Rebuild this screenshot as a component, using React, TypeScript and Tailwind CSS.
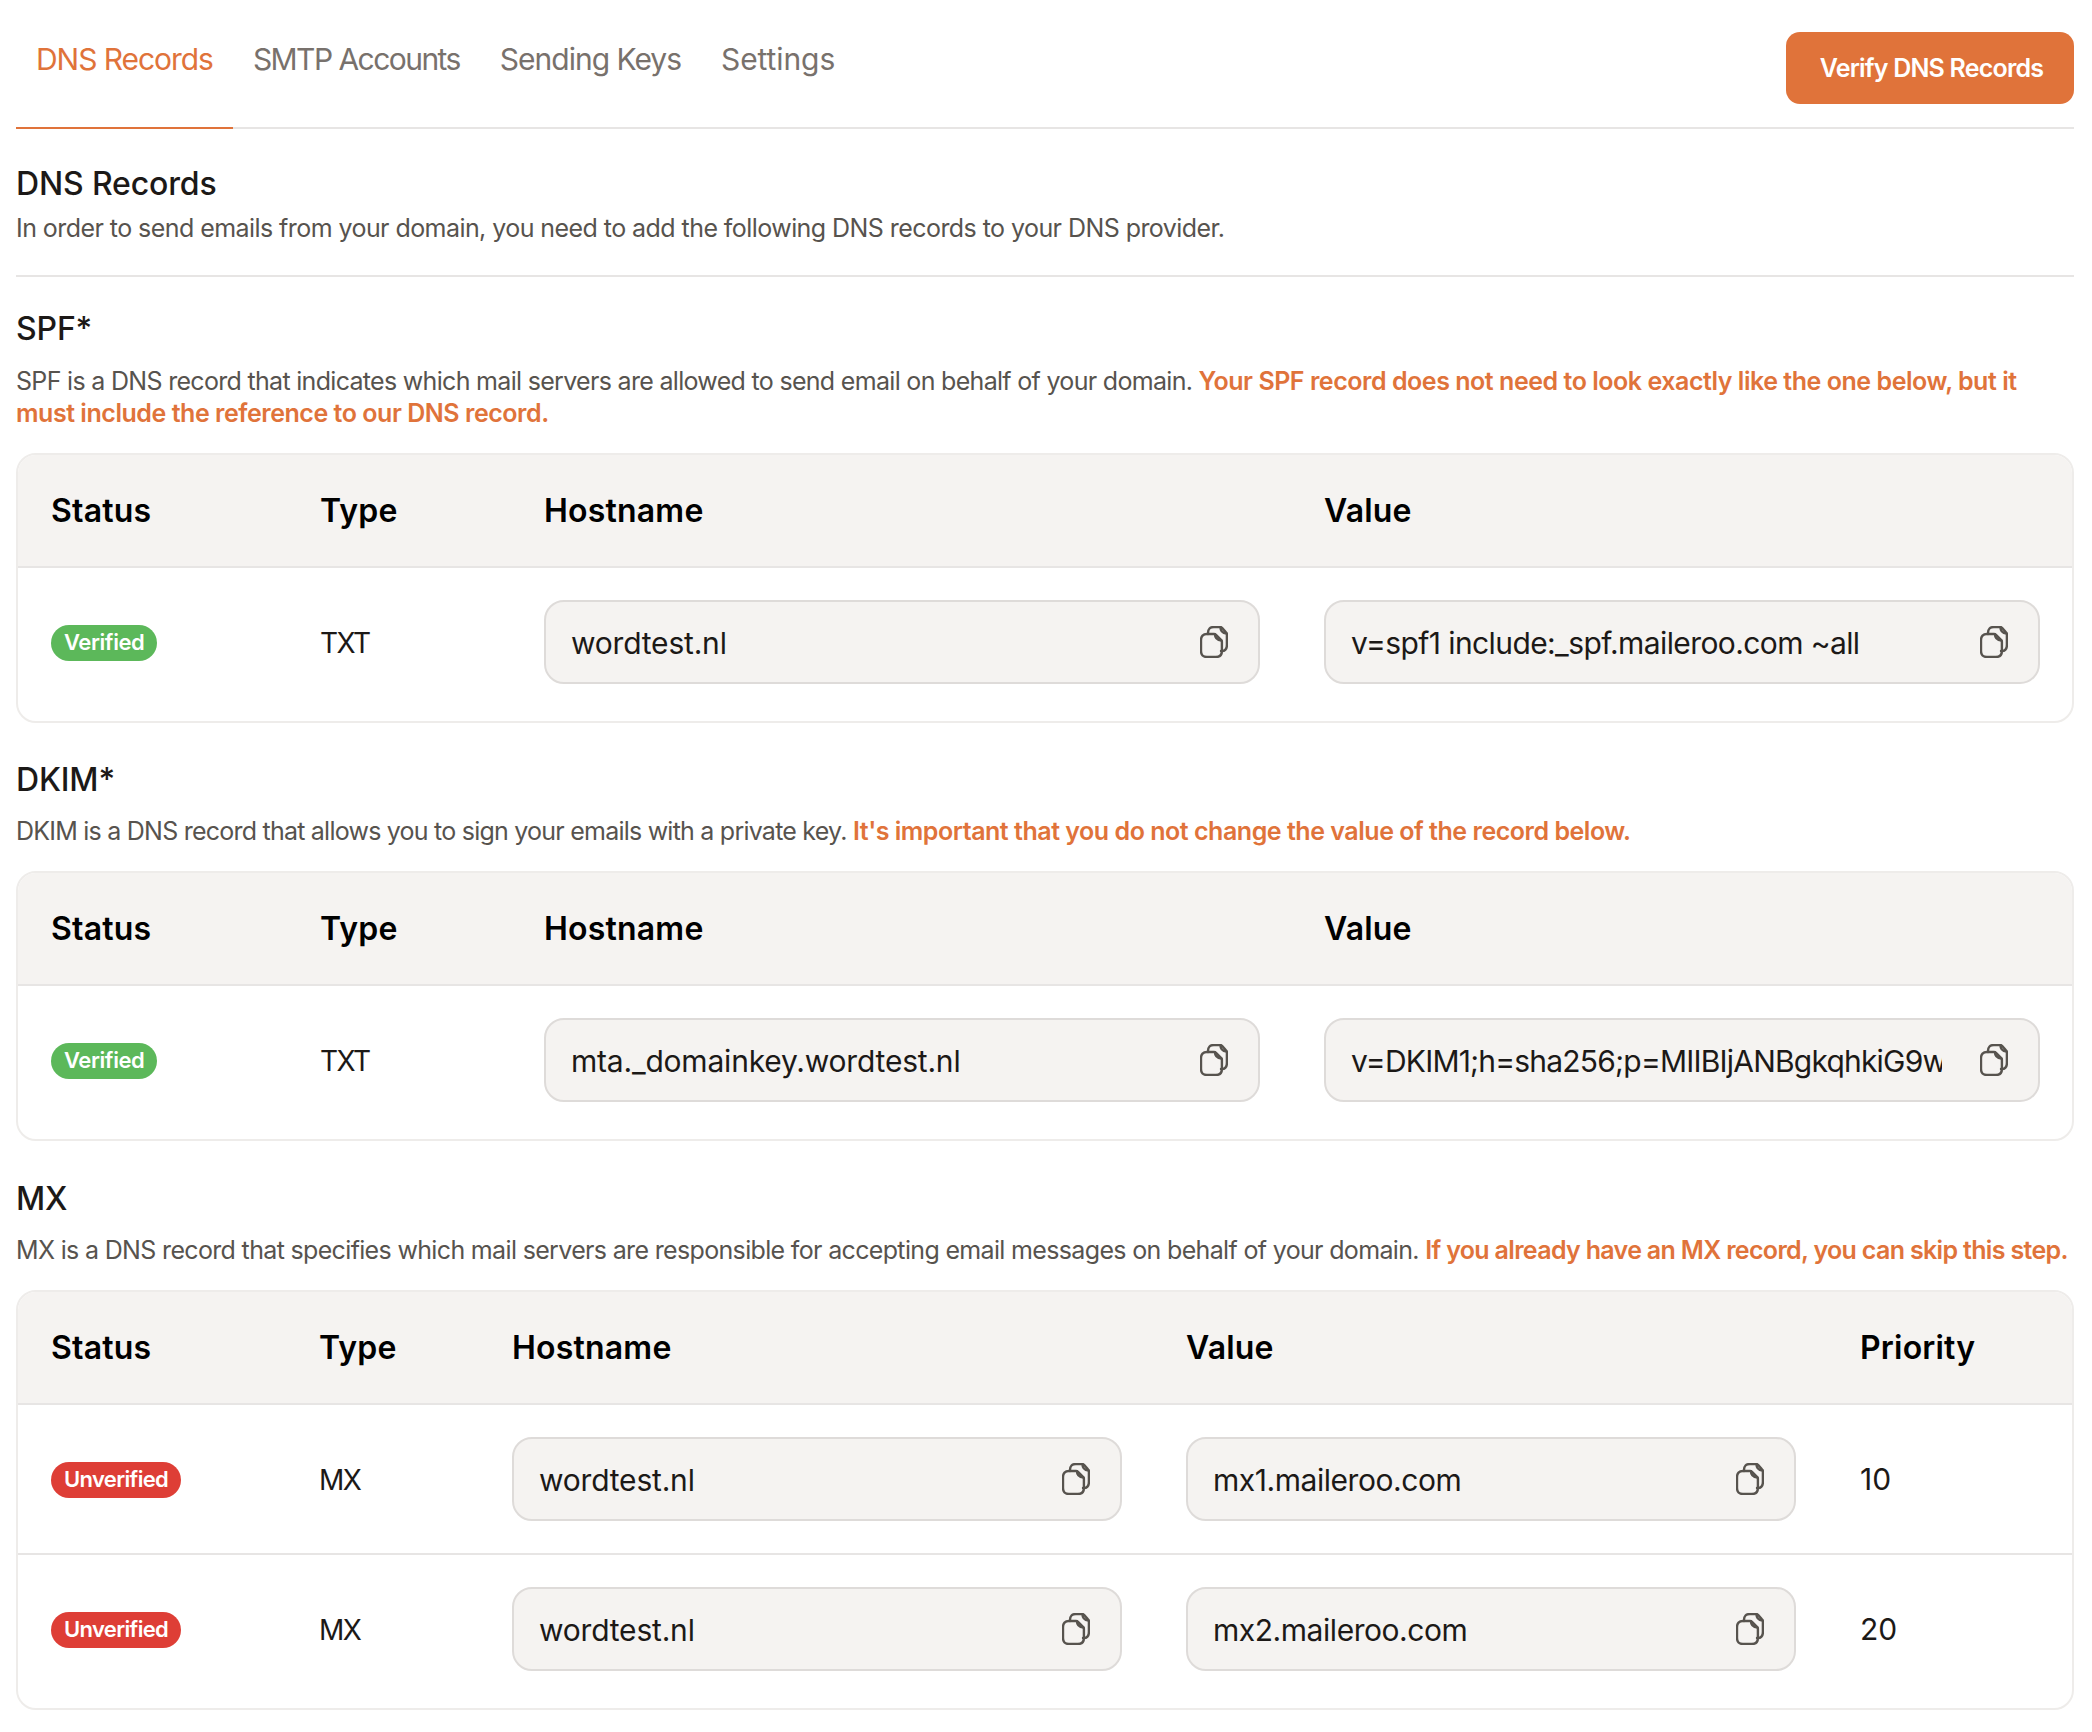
import React from 'react'

const font = "font-['Inter',sans-serif]"

const CopyIcon = () => (
  <svg width="28" height="32" viewBox="0 0 28 32" fill="none" stroke="#57534e" strokeWidth="2.4" strokeLinejoin="round" strokeLinecap="round" className="shrink-0">
    <path d="M8 8V7c0-4 2-6 6-6h6c1 0 1.500.3 2 .8l4 4.500c.5.5.9 1 .9 2V19c0 4-2 6-5 6h-.9" />
    <path d="M20.500 1.500c0 3 2 5.500 6 6" />
    <path d="M7 8h7c1 0 1.500.3 2 .8l5 5c.5.5.9 1 .9 2V25c0 4-2 6-6 6H7c-4 0-6-2-6-6V14c0-4 2-6 6-6z" />
    <path d="M15 8.500c0 3 2 5.500 6.500 6" />
  </svg>
)

const Badge = ({ ok }: { ok: boolean }) => (
  <span className={`mt-[1px] inline-flex h-[36px] items-center rounded-full px-[13px] text-[22px] font-semibold text-white ${ok ? 'bg-[#5cb85a] tracking-[-0.4px]' : 'bg-[#de3e36] tracking-[-0.65px]'}`}>
    {ok ? 'Verified' : 'Unverified'}
  </span>
)

const Field = ({ value, tight = 'tracking-[-0.2px]' }: { value: string; tight?: string }) => (
  <div className="flex h-[84px] items-center justify-between rounded-[20px] border-2 border-[#dedbd9] bg-[#f5f3f1] pl-[25px] pr-[30px]">
    <span className={`w-[591px] max-w-full overflow-hidden whitespace-nowrap pt-[2px] text-[30px] text-[#1c1917] ${tight}`}>{value}</span>
    <CopyIcon />
  </div>
)

const HeadCell = ({ children }: { children: React.ReactNode }) => (
  <div className="text-[32px] font-semibold tracking-[0.2px] text-black">{children}</div>
)

type Row = { ok: boolean; type: string; host: string; value: string; tight: string; priority?: string }

const Table = ({ cols, head, rows }: { cols: string; head: string[]; rows: Row[] }) => (
  <div className="overflow-hidden rounded-[20px] border-2 border-[#eeecea]">
    <div className={`grid h-[113px] items-center border-b-2 border-[#e7e5e4] bg-[#f5f3f1] pl-[33px] pr-[32px] ${cols}`}>
      {head.map(h => <HeadCell key={h}>{h}</HeadCell>)}
    </div>
    {rows.map((r, i) => (
      <div key={i} className={`grid items-center pl-[33px] pr-[32px] pt-[32px] ${cols} ${i > 0 ? 'border-t-2 border-[#e7e5e4]' : ''} ${i === rows.length - 1 ? 'pb-[37px]' : 'pb-[32px]'}`}>
        <div><Badge ok={r.ok} /></div>
        <div className="pt-[1px] text-[28px] tracking-[-1.5px] text-[#1c1917]">{r.type}</div>
        <div className="pr-[64px]"><Field value={r.host} /></div>
        <div className={r.priority ? 'pr-[64px]' : ''}><Field value={r.value} tight={r.tight} /></div>
        {r.priority && <div className="text-[30px] text-[#1c1917]">{r.priority}</div>}
      </div>
    ))}
  </div>
)

const Title = ({ children }: { children: React.ReactNode }) => (
  <h2 className="text-[32px] font-medium leading-[40px] tracking-[-0.15px] text-[#1c1917]">{children}</h2>
)

const Desc = ({ children, top = 'mt-[15px]' }: { children: React.ReactNode; top?: string }) => (
  <p className={`${top} text-[25px] leading-[32px] text-[#57534e]`}>{children}</p>
)

const Warn = ({ children, className }: { children: React.ReactNode; className: string }) => (
  <span className={`font-semibold text-[#e0733a] ${className}`}>{children}</span>
)

const twoCols = 'grid-cols-[269px_224px_780px_1fr]'
const mxCols = 'grid-cols-[268px_193px_674px_674px_1fr]'

export default function App() {
  return (
    <div className={`${font} h-[1732px] w-[2092px] overflow-hidden bg-white pl-[16px] pr-[18px]`}>
      <div className="flex h-[129px] items-start justify-between border-b-2 border-[#e7e5e4]">
        <nav className="flex h-[129px] text-[30px] text-[#78716c]">
          <a className="-mb-[2px] flex h-[129px] items-start border-b-2 border-[#e0733a] px-[20px] pt-[37px] tracking-[-1.05px] text-[#e0733a]">DNS Records</a>
          <a className="px-[20px] pt-[37px] tracking-[-1.55px]">SMTP Accounts</a>
          <a className="px-[20px] pt-[37px] tracking-[-1px]">Sending Keys</a>
          <a className="px-[20px] pt-[37px] tracking-[-0.1px]">Settings</a>
        </nav>
        <button className="mt-[32px] h-[72px] w-[288px] rounded-[14px] bg-[#e0733a] pl-[3px] pt-[2px] text-[25px] font-semibold tracking-[-0.8px] text-white">Verify DNS Records</button>
      </div>

      <div className="border-b-2 border-[#e7e5e4] pb-[31px] pt-[35px]">
        <Title>DNS Records</Title>
        <p className="mt-[8px] text-[25px] leading-[32px] tracking-[-0.56px] text-[#57534e]">In order to send emails from your domain, you need to add the following DNS records to your DNS provider.</p>
      </div>

      <section className="mt-[32px]">
        <Title>SPF*</Title>
        <Desc top="mt-[16px]"><span className="tracking-[-0.69px]">SPF is a DNS record that indicates which mail servers are allowed to send email on behalf of your domain. </span><Warn className="tracking-[-0.46px]">Your SPF record does not need to look exactly like the one below, but it<br />must include the reference to our DNS record.</Warn></Desc>
        <div className="mt-[24px]">
          <Table cols={twoCols} head={['Status', 'Type', 'Hostname', 'Value']} rows={[{ ok: true, type: 'TXT', host: 'wordtest.nl', value: 'v=spf1 include:_spf.maileroo.com ~all', tight: 'tracking-[-0.6px]' }]} />
        </div>
      </section>

      <section className="mt-[37px]">
        <Title>DKIM*</Title>
        <Desc><span className="tracking-[-0.77px]">DKIM is a DNS record that allows you to sign your emails with a private key. </span><Warn className="tracking-[-0.47px]">It's important that you do not change the value of the record below.</Warn></Desc>
        <div className="mt-[24px]">
          <Table cols={twoCols} head={['Status', 'Type', 'Hostname', 'Value']} rows={[{ ok: true, type: 'TXT', host: 'mta._domainkey.wordtest.nl', value: 'v=DKIM1;h=sha256;p=MIIBIjANBgkqhkiG9w0BAQEFAAOCAQ8AMIIBCgKCAQEA', tight: 'tracking-[-0.8px]' }]} />
        </div>
      </section>

      <section className="mt-[38px]">
        <Title>MX</Title>
        <Desc><span className="tracking-[-0.66px]">MX is a DNS record that specifies which mail servers are responsible for accepting email messages on behalf of your domain. </span><Warn className="tracking-[-0.67px]">If you already have an MX record, you can skip this step.</Warn></Desc>
        <div className="mt-[24px]">
          <Table cols={mxCols} head={['Status', 'Type', 'Hostname', 'Value', 'Priority']} rows={[
            { ok: false, type: 'MX', host: 'wordtest.nl', value: 'mx1.maileroo.com', priority: '10', tight: 'tracking-[-0.45px]' },
            { ok: false, type: 'MX', host: 'wordtest.nl', value: 'mx2.maileroo.com', priority: '20', tight: 'tracking-[-0.45px]' },
          ]} />
        </div>
      </section>
    </div>
  )
}
